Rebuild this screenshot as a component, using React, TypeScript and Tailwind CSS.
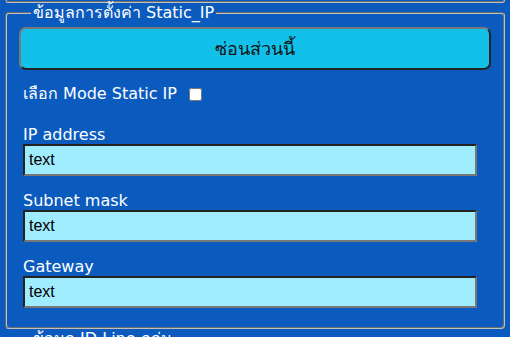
import React from 'react';

const fields = ['IP address', 'Subnet mask', 'Gateway'];

const App: React.FC = () => {
  return (
    <div className="w-[510px] h-[337px] overflow-hidden bg-[#0b5bbf] text-white font-['DejaVu_Sans',sans-serif]">
      {/* tail of the section above */}
      <div className="mx-[5px] h-[3px] border-x-2 border-b-2 border-[#c0c0c0] [border-style:groove] rounded-b-[4px]" />

      <fieldset className="mx-[5px] px-3 pb-[19px] border-2 border-[#c0c0c0] [border-style:groove] rounded-[4px]">
        <legend className="ml-3 px-[2px] text-[16px] leading-[20px]">ข้อมูลการตั้งค่า Static_IP</legend>

        <button className="mt-[4px] w-full h-[43px] rounded-[7px] border-2 border-t-[#7a7a7a] border-l-[#7a7a7a] border-b-[#222] border-r-[#222] bg-[#12c0ea] text-[18px] text-[#111]">
          ซ่อนส่วนนี้
        </button>

        <div className="mt-[14px] ml-1 h-[20px] flex items-center text-[16px] leading-[20px]">
          <span>เลือก Mode Static IP</span>
          <input type="checkbox" className="ml-[12px] w-[13px] h-[13px]" />
        </div>

        <div className="mt-[21px] ml-1 flex flex-col">
          {fields.map((f, i) => (
            <div key={f} className={i > 0 ? 'mt-[15px]' : ''}>
              <div className="text-[16px] leading-[19px]">{f}</div>
              <input
                defaultValue="text"
                className="w-[454px] h-[32px] pl-1 border-2 border-t-[#222] border-l-[#222] border-b-[#777] border-r-[#777] bg-[#a0ecff] text-black text-[16px] font-['Liberation_Sans',Arial,sans-serif] outline-none"
              />
            </div>
          ))}
        </div>
      </fieldset>

      <fieldset className="mx-[5px] px-3 border-2 border-[#c0c0c0] [border-style:groove] rounded-[4px]">
        <legend className="ml-3 px-[2px] text-[16px] leading-[20px]">ข้อมูล ID Line กลุ่ม</legend>
        <div className="h-[40px]" />
      </fieldset>
    </div>
  );
};

export default App;
